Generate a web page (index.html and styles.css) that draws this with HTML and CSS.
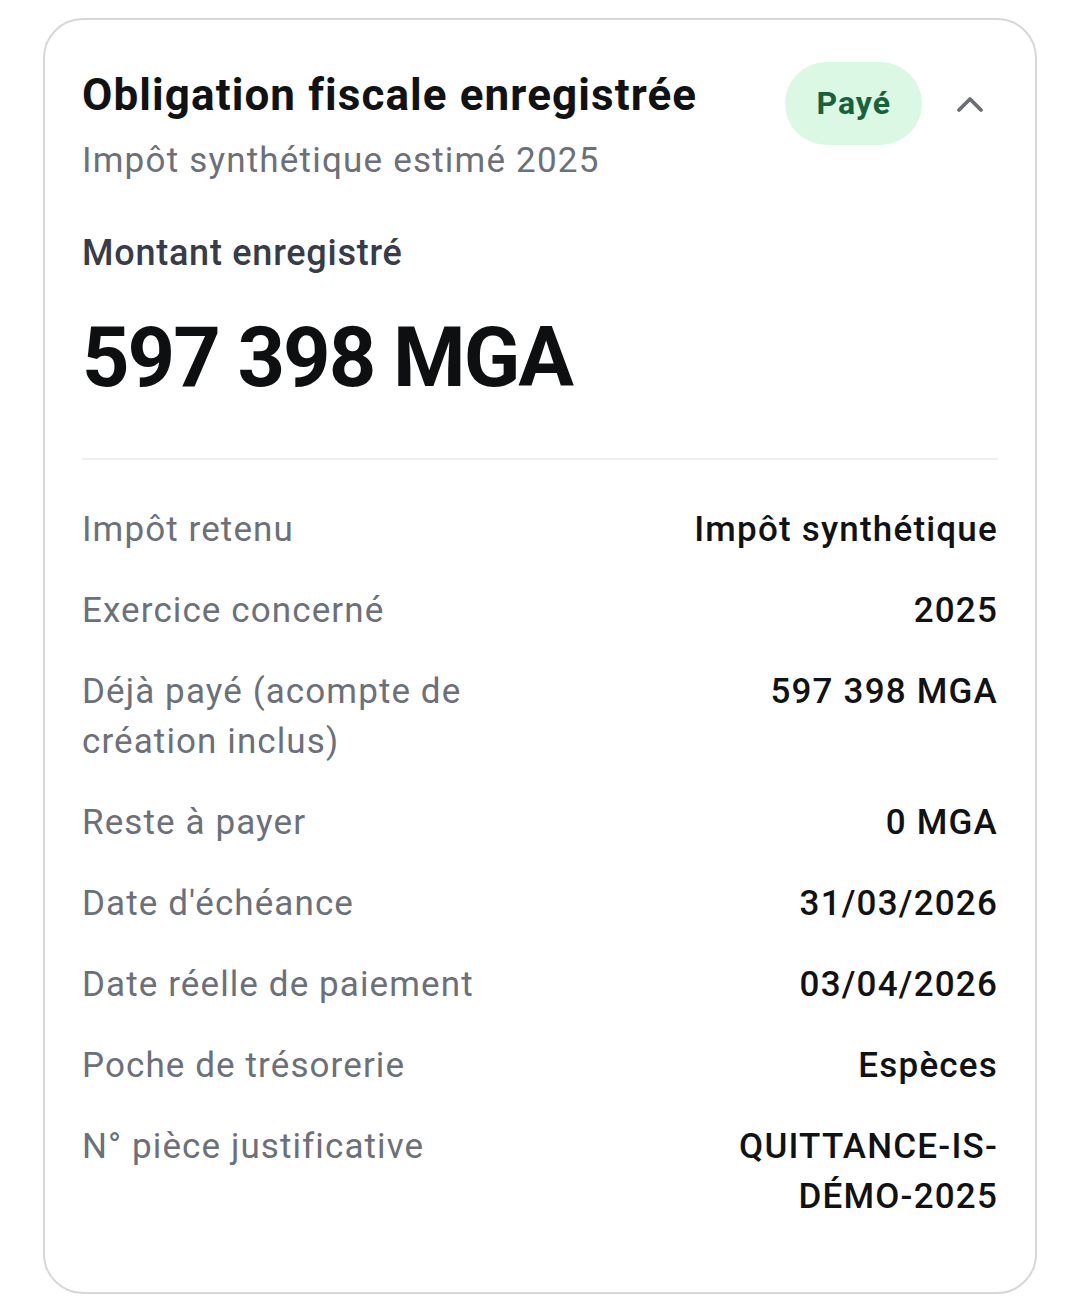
FILE: index.html
```html
<!DOCTYPE html>
<html lang="fr">
<head>
  <meta charset="UTF-8" />
  <meta name="viewport" content="width=device-width, initial-scale=1" />
  <title>Obligation fiscale</title>
  <link rel="stylesheet" href="styles.css">
</head>
<body>

  <div class="tax-card">
    <div class="tax-head">
      <div class="tax-titles">
        <h1 class="tax-title">Obligation fiscale enregistrée</h1>
        <div class="tax-sub">Impôt synthétique estimé 2025</div>
      </div>
      <div class="tax-actions">
        <span class="badge-paid">Payé</span>
        <svg class="chevron" width="30" height="20" viewBox="0 0 30 20" fill="none" stroke="currentColor" stroke-width="3.8" stroke-linecap="round" stroke-linejoin="round">
          <path d="M4 16L15 5l11 11" />
        </svg>
      </div>
    </div>

    <div class="amount-label">Montant enregistré</div>
    <div class="amount">597 398 MGA</div>

    <div class="divider"></div>

    <dl class="details">
      <div class="row">
        <dt>Impôt retenu</dt>
        <dd>Impôt synthétique</dd>
      </div>
      <div class="row">
        <dt>Exercice concerné</dt>
        <dd>2025</dd>
      </div>
      <div class="row">
        <dt>Déjà payé (acompte de création inclus)</dt>
        <dd>597 398 MGA</dd>
      </div>
      <div class="row">
        <dt>Reste à payer</dt>
        <dd>0 MGA</dd>
      </div>
      <div class="row">
        <dt>Date d'échéance</dt>
        <dd>31/03/2026</dd>
      </div>
      <div class="row">
        <dt>Date réelle de paiement</dt>
        <dd>03/04/2026</dd>
      </div>
      <div class="row">
        <dt>Poche de trésorerie</dt>
        <dd>Espèces</dd>
      </div>
      <div class="row">
        <dt>N° pièce justificative</dt>
        <dd class="ref">QUITTANCE-IS-DÉMO-2025</dd>
      </div>
    </dl>
  </div>

</body>
</html>
```

FILE: styles.css
```css
/* Baseline */
* {
  margin: 0;
  padding: 0;
  box-sizing: border-box;
}
body {
  background: #ffffff;
  font-family: Roboto, 'Noto Sans', Arial, sans-serif;
  color: #111214;
  padding: 18px 0 0 43px;
}

/* Card */
.tax-card {
  width: 994px;
  min-height: 1276px;
  border: 2px solid #d6d7d9;
  border-radius: 40px;
  padding: 50px 37px 60px 37px;
}

/* Header */
.tax-head {
  display: flex;
  justify-content: space-between;
  align-items: flex-start;
}
.tax-title {
  font-size: 44px;
  font-weight: 700;
  line-height: 50px;
  letter-spacing: 1.1px;
  color: #111214;
}
.tax-sub {
  margin-top: 19px;
  font-size: 35px;
  line-height: 44px;
  color: #6b7079;
  letter-spacing: 1.2px;
}
.tax-actions {
  display: flex;
  align-items: center;
  gap: 33px;
  margin-top: -8px;
  margin-right: 13px;
}
.badge-paid {
  display: inline-block;
  background: #dbf8e4;
  color: #17623a;
  font-size: 32px;
  font-weight: 700;
  line-height: 83px;
  letter-spacing: 1px;
  padding: 0 31px;
  border-radius: 42px;
}
.chevron {
  color: #6b6e73;
}

/* Amount */
.amount-label {
  margin-top: 48px;
  font-size: 36px;
  font-weight: 500;
  line-height: 44px;
  color: #363c48;
  letter-spacing: 0.75px;
}
.amount {
  margin-top: 33px;
  font-size: 83px;
  font-weight: 700;
  line-height: 100px;
  letter-spacing: -2px;
  color: #0e0f11;
}

.divider {
  height: 2px;
  background: #efefef;
  margin-top: 50px;
}

/* Details list */
.details {
  margin-top: 45px;
  display: flex;
  flex-direction: column;
  gap: 31px;
}
.row {
  display: flex;
  justify-content: space-between;
  align-items: flex-start;
  gap: 40px;
  font-size: 35px;
  line-height: 50px;
}
.row dt {
  color: #6b7079;
  max-width: 420px;
  letter-spacing: 1.1px;
}
.row dd {
  color: #111214;
  font-weight: 500;
  text-align: right;
  letter-spacing: 1.2px;
}
.row dd.ref {
  max-width: 300px;
}
```
